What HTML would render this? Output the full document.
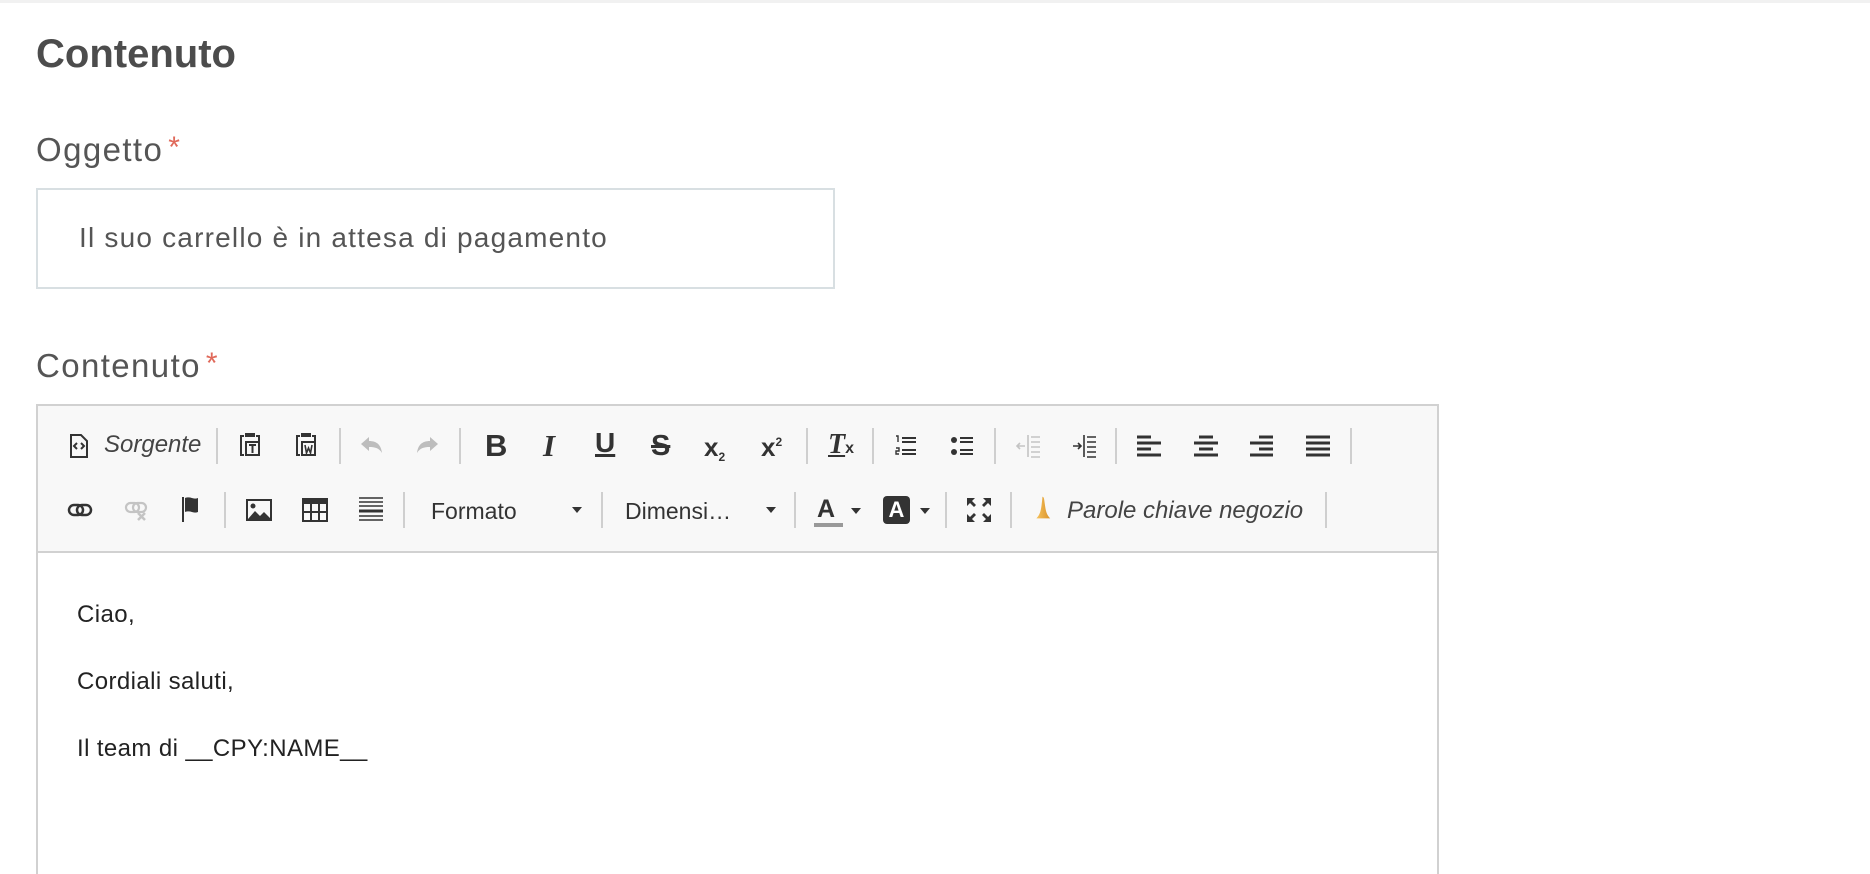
<!DOCTYPE html>
<html style="width:1870px;height:874px;overflow:hidden"><head><meta charset="utf-8"><style>
*{margin:0;padding:0;box-sizing:border-box}
body{width:1870px;height:874px;background:#fff;position:relative;overflow:hidden;font-family:"Liberation Sans",sans-serif;color:#555}
.a{position:absolute}
.ic{position:absolute;width:26px;height:26px}
.sep{position:absolute;width:2px;height:36px;background:#cfcfcf}
.tt{position:absolute;font-size:22px;color:#333;line-height:26px}
.lbl{position:absolute;left:36px;font-size:33px;color:#555;letter-spacing:1.4px}
.req{color:#e0695a;font-size:30px;margin-left:5px;position:relative;top:-4px}
.ct{position:absolute;left:77px;font-size:24px;color:#222;letter-spacing:0.4px}
</style></head><body>
<div class="a" style="left:0;top:0;width:1870px;height:3px;background:#f1f1f1"></div>
<div class="a" style="left:36px;top:32px;font-size:40px;font-weight:bold;color:#4c4c4c">Contenuto</div>
<div class="lbl" style="top:131px">Oggetto<span class="req">*</span></div>
<div class="a" style="left:36px;top:188px;width:799px;height:101px;border:2px solid #d8dfe2"></div>
<div class="a" style="left:79px;top:222px;font-size:28px;color:#555;letter-spacing:1.2px">Il suo carrello è in attesa di pagamento</div>
<div class="lbl" style="top:347px">Contenuto<span class="req">*</span></div>

<div class="a" style="left:36px;top:404px;width:1403px;height:480px;border:2px solid #d1d1d1;background:#fff"></div>
<div class="a" style="left:38px;top:406px;width:1399px;height:147px;background:#f8f8f8;border-bottom:2px solid #d1d1d1"></div>

<!-- Row 1 -->
<svg class="ic" style="left:66px;top:433px" viewBox="0 0 26 26"><path d="M5 2h10l6 6v16H5z" fill="none" stroke="#333" stroke-width="2"/><path d="M11 10l-3 3 3 3M15 10l3 3-3 3" fill="none" stroke="#333" stroke-width="2"/></svg>
<div class="tt" style="left:104px;top:432px;font-style:italic;color:#444;font-size:24px">Sorgente</div>
<div class="sep" style="left:216px;top:428px"></div>
<svg class="ic" style="left:237px;top:431px" viewBox="0 0 26 26"><path d="M7 5H4v19h3" fill="none" stroke="#333" stroke-width="2"/><rect x="8" y="2" width="10" height="4" fill="#333"/><path d="M19 5h3v5" fill="none" stroke="#333" stroke-width="2"/><rect x="9" y="11" width="13" height="13" fill="none" stroke="#333" stroke-width="2"/><path d="M12 14h7M15.5 14v8" stroke="#333" stroke-width="2"/></svg>
<svg class="ic" style="left:293px;top:431px" viewBox="0 0 26 26"><path d="M7 5H4v19h3" fill="none" stroke="#333" stroke-width="2"/><rect x="8" y="2" width="10" height="4" fill="#333"/><path d="M19 5h3v5" fill="none" stroke="#333" stroke-width="2"/><rect x="9" y="11" width="13" height="13" fill="none" stroke="#333" stroke-width="2"/><path d="M12 14l1.5 8 2-5 2 5 1.5-8" fill="none" stroke="#333" stroke-width="1.6"/></svg>
<div class="sep" style="left:339px;top:428px"></div>
<svg class="ic" style="left:359px;top:433px" viewBox="0 0 26 26"><path d="M10 4L2 11l8 7v-4c6 0 10 1 13 6-1-8-5-12-13-12z" fill="#bdbdbd"/></svg>
<svg class="ic" style="left:414px;top:433px" viewBox="0 0 26 26"><path d="M16 4l8 7-8 7v-4c-6 0-10 1-13 6 1-8 5-12 13-12z" fill="#bdbdbd"/></svg>
<div class="sep" style="left:459px;top:428px"></div>
<div class="tt" style="left:485px;top:433px;font-size:31px;font-weight:bold;color:#333">B</div>
<div class="tt" style="left:543px;top:433px;font-size:31px;font-weight:bold;font-style:italic;font-family:'Liberation Serif',serif;color:#333">I</div>
<div class="tt" style="left:595px;top:430px;font-size:28px;font-weight:bold;color:#333;text-decoration:underline;text-decoration-thickness:3px">U</div>
<div class="tt" style="left:651px;top:433px;font-size:29px;font-weight:bold;color:#333;text-decoration:line-through;text-decoration-thickness:3px">S</div>
<div class="tt" style="left:704px;top:434px;font-size:26px;font-weight:bold;color:#333">x<span style="font-size:12px;position:relative;top:5px">2</span></div>
<div class="tt" style="left:761px;top:434px;font-size:26px;font-weight:bold;color:#333">x<span style="font-size:12px;position:relative;top:-10px">2</span></div>
<div class="sep" style="left:806px;top:428px"></div>
<div class="tt" style="left:828px;top:432px;font-size:28px;font-weight:bold;font-style:italic;font-family:'Liberation Serif',serif;color:#333;text-decoration:underline">T<span style="font-size:16px;font-style:normal;font-family:'Liberation Sans';text-decoration:none;display:inline-block">x</span></div>
<div class="sep" style="left:872px;top:428px"></div>
<svg class="ic" style="left:893px;top:433px" viewBox="0 0 26 26"><path d="M3 3h2v6M3 15h3v3H3v3h3" fill="none" stroke="#333" stroke-width="1.4"/><path d="M9 5h14M9 9h14M9 17h14M9 21h14" stroke="#333" stroke-width="2"/></svg>
<svg class="ic" style="left:949px;top:433px" viewBox="0 0 26 26"><circle cx="5" cy="7" r="3" fill="#333"/><circle cx="5" cy="19" r="3" fill="#333"/><path d="M11 5h13M11 9h13M11 17h13M11 21h13" stroke="#333" stroke-width="2"/></svg>
<div class="sep" style="left:994px;top:428px"></div>
<svg class="ic" style="left:1015px;top:433px" viewBox="0 0 26 26"><path d="M13 2v22M16 4h9M16 9h9M16 14h9M16 19h9M16 24h9M2 13h8M5 10l-3 3 3 3" fill="none" stroke="#c4c4c4" stroke-width="1.6"/></svg>
<svg class="ic" style="left:1071px;top:433px" viewBox="0 0 26 26"><path d="M13 2v22M16 4h9M16 9h9M16 14h9M16 19h9M16 24h9M2 13h8M7 10l3 3-3 3" fill="none" stroke="#333" stroke-width="1.6"/></svg>
<div class="sep" style="left:1115px;top:428px"></div>
<svg class="ic" style="left:1135px;top:433px" viewBox="0 0 26 26"><path d="M2 4h14M2 10h24M2 16h14M2 22h24" stroke="#333" stroke-width="3"/></svg>
<svg class="ic" style="left:1193px;top:433px" viewBox="0 0 26 26"><path d="M6 4h14M1 10h24M6 16h14M1 22h24" stroke="#333" stroke-width="3"/></svg>
<svg class="ic" style="left:1249px;top:433px" viewBox="0 0 26 26"><path d="M10 4h14M1 10h23M10 16h14M1 22h23" stroke="#333" stroke-width="3"/></svg>
<svg class="ic" style="left:1305px;top:433px" viewBox="0 0 26 26"><path d="M1 4h24M1 10h24M1 16h24M1 22h24" stroke="#333" stroke-width="3"/></svg>
<div class="sep" style="left:1350px;top:428px"></div>

<!-- Row 2 -->
<svg class="ic" style="left:67px;top:497px" viewBox="0 0 26 26"><rect x="2" y="8" width="14" height="10" rx="5" fill="none" stroke="#333" stroke-width="2.5"/><rect x="10" y="8" width="14" height="10" rx="5" fill="none" stroke="#333" stroke-width="2.5"/></svg>
<svg class="ic" style="left:124px;top:497px" viewBox="0 0 26 26"><rect x="2" y="6" width="13" height="9" rx="4.5" fill="none" stroke="#c4c4c4" stroke-width="2.2"/><rect x="9" y="6" width="13" height="9" rx="4.5" fill="none" stroke="#c4c4c4" stroke-width="2.2"/><path d="M14 16l7 7M21 16l-7 7" stroke="#c4c4c4" stroke-width="2.5"/></svg>
<svg class="ic" style="left:180px;top:496px" viewBox="0 0 26 26"><path d="M3 1v26" stroke="#333" stroke-width="2"/><path d="M5 2c6-2 8 2 13 0v14c-5 2-7-2-13 0z" fill="#333"/></svg>
<div class="sep" style="left:224px;top:492px"></div>
<svg class="ic" style="left:246px;top:497px" viewBox="0 0 26 26"><rect x="1" y="3" width="24" height="20" fill="none" stroke="#333" stroke-width="2"/><circle cx="7" cy="9" r="2.5" fill="#333"/><path d="M2 22l7-8 5 5 4-4 7 7z" fill="#333"/></svg>
<svg class="ic" style="left:302px;top:497px" viewBox="0 0 26 26"><rect x="1" y="2" width="24" height="22" fill="none" stroke="#333" stroke-width="2"/><rect x="1" y="2" width="24" height="5" fill="#333"/><path d="M1 15h24M9 7v17M17 7v17" stroke="#333" stroke-width="2"/></svg>
<svg class="ic" style="left:358px;top:496px" viewBox="0 0 26 26"><path d="M1 2h24M1 6h24M1 10h24M1 20h24M1 24h24" stroke="#333" stroke-width="1.5"/><path d="M1 15h24" stroke="#333" stroke-width="3"/></svg>
<div class="sep" style="left:403px;top:492px"></div>
<div class="tt" style="left:431px;top:498px;color:#333;font-size:23px">Formato</div>
<svg class="a" style="left:571px;top:506px" width="12" height="8" viewBox="0 0 12 8"><path d="M1 1h10L6 7z" fill="#333"/></svg>
<div class="sep" style="left:601px;top:492px"></div>
<div class="tt" style="left:625px;top:498px;color:#333;font-size:23px">Dimensi…</div>
<svg class="a" style="left:765px;top:506px" width="12" height="8" viewBox="0 0 12 8"><path d="M1 1h10L6 7z" fill="#333"/></svg>
<div class="sep" style="left:794px;top:492px"></div>
<div class="tt" style="left:817px;top:496px;font-size:25px;font-weight:bold;color:#333">A</div>
<div class="a" style="left:814px;top:523px;width:29px;height:4px;background:#999"></div>
<svg class="a" style="left:850px;top:507px" width="12" height="8" viewBox="0 0 12 8"><path d="M1 1h10L6 7z" fill="#333"/></svg>
<div class="a" style="left:883px;top:496px;width:27px;height:28px;border-radius:4px;background:#333;color:#fff;font-weight:bold;font-size:22px;text-align:center;line-height:28px">A</div>
<svg class="a" style="left:919px;top:507px" width="12" height="8" viewBox="0 0 12 8"><path d="M1 1h10L6 7z" fill="#333"/></svg>
<div class="sep" style="left:945px;top:492px"></div>
<svg class="ic" style="left:966px;top:497px" viewBox="0 0 26 26"><path d="M1 1h8l-3 3 4 4-2 2-4-4-3 3zM25 1h-8l3 3-4 4 2 2 4-4 3 3zM1 25h8l-3-3 4-4-2-2-4 4-3-3zM25 25h-8l3-3-4-4 2-2 4 4 3-3z" fill="#333"/></svg>
<div class="sep" style="left:1010px;top:492px"></div>
<svg class="ic" style="left:1032px;top:495px" viewBox="0 0 26 30"><defs><linearGradient id="g" x1="0" x2="1"><stop offset="0" stop-color="#f6c25c"/><stop offset="1" stop-color="#d9922a"/></linearGradient></defs><path d="M10 2c2 0 2 3 3 10 1 7 2 11 6 15H3c4-4 5-8 6-15C10 5 10 2 10 2z" fill="url(#g)"/></svg>
<div class="tt" style="left:1067px;top:498px;font-style:italic;color:#444;font-size:24px">Parole chiave negozio</div>
<div class="sep" style="left:1325px;top:492px"></div>

<div class="ct" style="top:601px">Ciao,</div>
<div class="ct" style="top:668px">Cordiali saluti,</div>
<div class="ct" style="top:735px">Il team di __CPY:NAME__</div>
</body></html>
